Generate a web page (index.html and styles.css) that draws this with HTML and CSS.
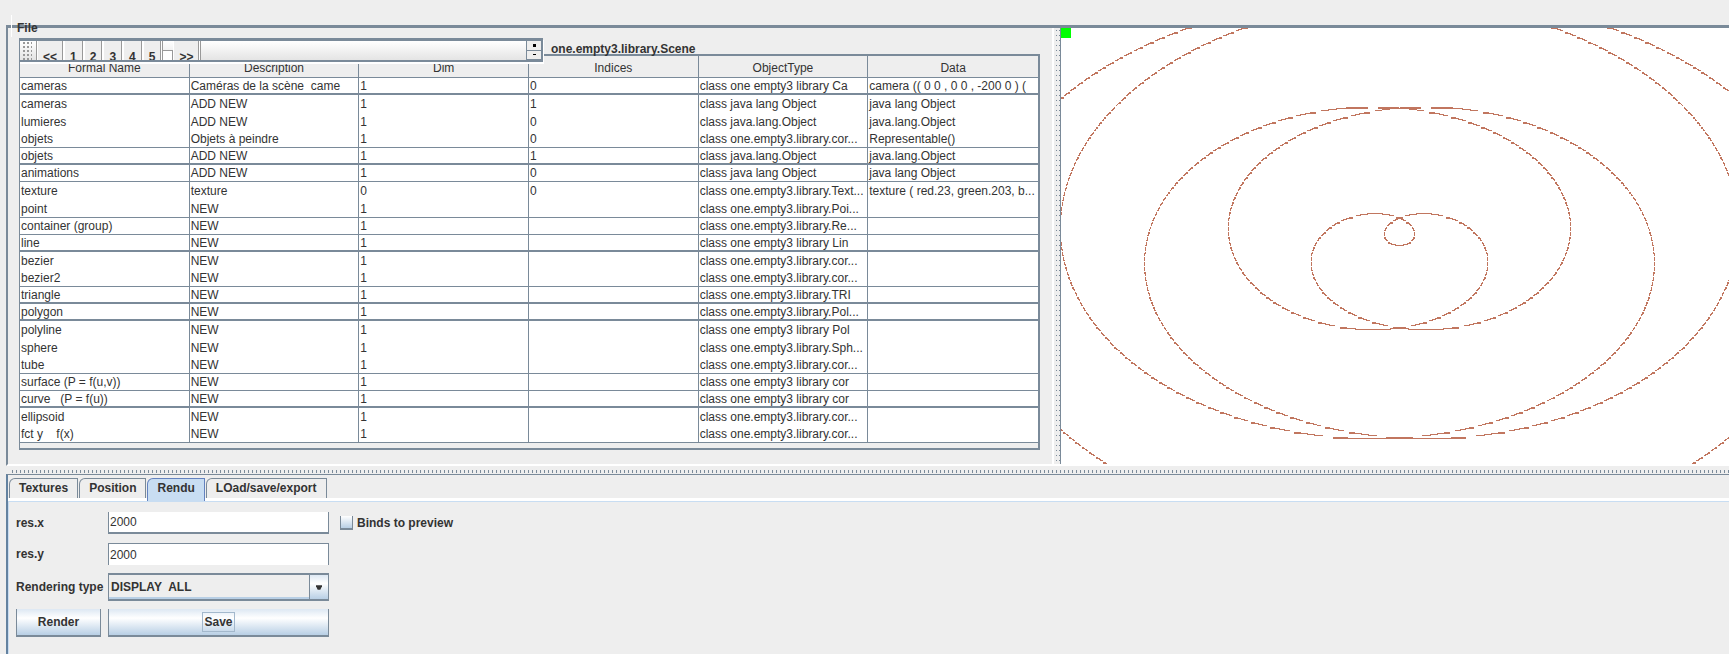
FILE: index.html
```
<!DOCTYPE html>
<html lang="fr">
<head>
<meta charset="utf-8">
<title>one.empty3.library.Scene</title>
<link rel="stylesheet" href="styles.css">
</head>
<body>
<div class="app">
  <header class="menu-bar"></header>
  <main class="workspace">
    <section class="editor">
      <button class="file-menu" type="button">File</button>
      <div class="toolbar-row">
        <div class="toolbar">
          <span class="grip"></span>
          <button type="button">&lt;&lt;</button>
          <button type="button">1</button>
          <button type="button">2</button>
          <button type="button">3</button>
          <button type="button">4</button>
          <button type="button">5</button>
          <input class="page-check" type="checkbox" aria-label="Page">
          <button type="button">&gt;&gt;</button>
          <div class="stepper">
            <button type="button" aria-label="Up"><svg viewBox="0 0 3 3"><rect width="3" height="3"/></svg></button>
            <button type="button" aria-label="Down"><svg viewBox="0 0 3 3"><rect y="1" width="3" height="1"/></svg></button>
          </div>
        </div>
        <span class="scene-name">one.empty3.library.Scene</span>
      </div>
      <div class="table-frame">
        <table class="props">
          <thead><tr><th>Formal Name</th><th>Description</th><th>Dim</th><th>Indices</th><th>ObjectType</th><th>Data</th></tr></thead>
          <tbody>
            <tr class="thick"><td>cameras</td><td>Caméras de la scène  came</td><td>1</td><td>0</td><td>class one empty3 library Ca</td><td>camera (( 0 0 , 0 0 , -200 0 ) (</td></tr>
            <tr class="open"><td>cameras</td><td>ADD NEW</td><td>1</td><td>1</td><td>class java lang Object</td><td>java lang Object</td></tr>
            <tr class="open"><td>lumieres</td><td>ADD NEW</td><td>1</td><td>0</td><td>class java.lang.Object</td><td>java.lang.Object</td></tr>
            <tr><td>objets</td><td>Objets à peindre</td><td>1</td><td>0</td><td>class one.empty3.library.cor...</td><td>Representable()</td></tr>
            <tr class="thick"><td>objets</td><td>ADD NEW</td><td>1</td><td>1</td><td>class java.lang.Object</td><td>java.lang.Object</td></tr>
            <tr><td>animations</td><td>ADD NEW</td><td>1</td><td>0</td><td>class java lang Object</td><td>java lang Object</td></tr>
            <tr class="open"><td>texture</td><td>texture</td><td>0</td><td>0</td><td>class one.empty3.library.Text...</td><td>texture ( red.23, green.203, b...</td></tr>
            <tr class="tall"><td>point</td><td>NEW</td><td>1</td><td></td><td>class one.empty3.library.Poi...</td><td></td></tr>
            <tr><td>container (group)</td><td>NEW</td><td>1</td><td></td><td>class one.empty3.library.Re...</td><td></td></tr>
            <tr class="thick"><td>line</td><td>NEW</td><td>1</td><td></td><td>class one empty3 library Lin</td><td></td></tr>
            <tr class="open"><td>bezier</td><td>NEW</td><td>1</td><td></td><td>class one.empty3.library.cor...</td><td></td></tr>
            <tr><td>bezier2</td><td>NEW</td><td>1</td><td></td><td>class one.empty3.library.cor...</td><td></td></tr>
            <tr class="thick"><td>triangle</td><td>NEW</td><td>1</td><td></td><td>class one.empty3.library.TRI</td><td></td></tr>
            <tr class="thick"><td>polygon</td><td>NEW</td><td>1</td><td></td><td>class one.empty3.library.Pol...</td><td></td></tr>
            <tr class="open"><td>polyline</td><td>NEW</td><td>1</td><td></td><td>class one empty3 library Pol</td><td></td></tr>
            <tr class="open"><td>sphere</td><td>NEW</td><td>1</td><td></td><td>class one.empty3.library.Sph...</td><td></td></tr>
            <tr><td>tube</td><td>NEW</td><td>1</td><td></td><td>class one.empty3.library.cor...</td><td></td></tr>
            <tr><td>surface (P = f(u,v))</td><td>NEW</td><td>1</td><td></td><td>class one empty3 library cor</td><td></td></tr>
            <tr class="thick"><td>curve   (P = f(u))</td><td>NEW</td><td>1</td><td></td><td>class one empty3 library cor</td><td></td></tr>
            <tr class="open"><td>ellipsoid</td><td>NEW</td><td>1</td><td></td><td>class one.empty3.library.cor...</td><td></td></tr>
            <tr><td>fct y    f(x)</td><td>NEW</td><td>1</td><td></td><td>class one.empty3.library.cor...</td><td></td></tr>
          </tbody>
        </table>
      </div>
    </section>
    <div class="divider-v"></div>
    <section class="preview">
      <canvas id="plot"></canvas>
      <span class="status-light"></span>
    </section>
  </main>
  <div class="divider-h"></div>
  <section class="tabs-pane">
    <nav class="tabs">
      <button type="button">Textures</button>
      <button type="button">Position</button>
      <button type="button" class="active">Rendu</button>
      <button type="button">LOad/save/export</button>
    </nav>
    <form class="render-form">
      <label for="resx">res.x</label>
      <input id="resx" class="field" type="text" value="2000">
      <label class="bind"><input type="checkbox" class="check">Binds to preview</label>
      <label for="resy">res.y</label>
      <input id="resy" class="field field-open" type="text" value="2000">
      <label class="row-start" for="rtype">Rendering type</label>
      <div class="combo">
        <select id="rtype"><option>DISPLAY&nbsp; ALL</option></select>
        <svg class="arrow" viewBox="0 0 7 5"><path d="M0 0h7v1L5 5H2L0 1z"/></svg>
      </div>
      <button class="push row-start" type="button">Render</button>
      <button class="push" type="button"><span class="focus">Save</span></button>
    </form>
  </section>
</div>
<script src="plot.js"></script>
</body>
</html>
```
FILE: styles.css
```
* { box-sizing: border-box; }
html, body { height: 100%; }
body { margin: 0; overflow: hidden; background: #eee; color: #333; font: 12px/14px "Liberation Sans", Arial, sans-serif; }
button, input, select { font: inherit; color: inherit; margin: 0; padding: 0; border: 0; border-radius: 0; background: none; appearance: none; }
.app { display: flex; flex-direction: column; height: 100%; padding-left: 6px; }
.menu-bar { height: 25px; flex: none; }
.workspace { display: flex; flex: none; border-top: 3px solid #7a8a99; border-left: 2px solid #7a8a99; border-bottom: 2px solid #fff; }
.editor { position: relative; flex: 1 1 0; min-width: 0; padding: 10px 12px 14px 11px; }
.file-menu { position: absolute; left: 3px; top: -13px; height: 22px; padding: 4px 0 0 5px; border-left: 1px solid #fff; font-weight: bold; line-height: 14px; }
.toolbar-row { position: relative; z-index: 1; display: flex; gap: 8px; height: 16px; font-weight: bold; }
.toolbar { display: flex; flex: 0 0 524px; height: 24px; border: solid #7a8a99; border-width: 3px 2px 2px 1px; background: linear-gradient(#fff, #e4e4e4); box-shadow: 1px 2px 0 #fff; overflow: hidden; }
.toolbar > button { border-left: 1px solid #fff; border-right: 1px solid #999; padding: 9px 5px 0; height: 22px; background: #eee; box-shadow: 1px 0 #fff, 2px 0 #999; margin-right: 1px; }
.grip { width: 17px; border-right: 1px solid #999; background: radial-gradient(circle, #999 1px, transparent 1px) 1px 0 / 4px 4px content-box; padding: 0 4px 0 1px; }
.page-check { width: 11px; height: 14px; margin-top: 9px; border: 1px solid #999; background: #fff; }
.stepper { display: flex; flex-direction: column; width: 15px; margin-left: auto; border-left: 1px solid #7a8a99; background: #eee; }
.stepper button { display: grid; place-items: center; height: 10px; border-bottom: 1px solid #7a8a99; }
.stepper svg { width: 3px; height: 3px; }
.scene-name { padding-top: 4px; }
.table-frame { border: solid #7a8a99; border-width: 2px 2px 2px 1px; padding-bottom: 5px; }
.props { width: 100%; table-layout: fixed; border-collapse: separate; border-spacing: 0; background: #fff; }
.props th { height: 22px; padding: 3px 0 0; background: #eee; font-weight: normal; }
.props td { height: 17px; padding: 0 1px; overflow: hidden; white-space: pre; line-height: 14px; }
.props th, .props td { border-right: 1px solid #7a8a99; border-bottom: 1px solid #7a8a99; }
.props th:last-child, .props td:last-child { border-right: 0; }
.props .thick td { border-bottom-width: 2px; }
.props .open td { border-bottom: 0; height: 18px; }
.props .tall td { height: 18px; }
.divider-v { flex: 0 0 8px; border-left: 2px solid #fff; background: radial-gradient(circle, #7a8a99 1px, transparent 1px) 1px 0 / 3px 5px; }
.divider-h { flex: none; height: 8px; background: repeating-linear-gradient(90deg, #7a8a99 0 1px, transparent 1px 4px) 6px 4px / 100% 3px no-repeat; }
.preview { position: relative; flex: 0 0 669px; border-left: 1px solid #7a8a99; background: #fff; }
.preview canvas { position: absolute; inset: 0; width: 100%; height: 100%; }
.status-light { position: absolute; left: 0; top: 0; width: 10px; height: 10px; background: #0f0; }
.tabs-pane { flex: 1; border-top: 1px solid #7a8a99; border-left: 2px solid #6382a0; }
.tabs { display: flex; align-items: flex-end; gap: 1px; height: 26px; padding-left: 1px; border-bottom: 3px solid #fff; }
.tabs button { height: 20px; padding: 0 9px 1px; border: 1px solid #7a8a99; border-bottom: 0; border-top-left-radius: 6px; font-weight: bold; }
.tabs .active { background: #c8ddf2; border-color: #6382bf; height: 23px; margin-bottom: -3px; padding-bottom: 4px; }
.render-form { display: grid; grid-template-columns: 85px 221px auto; grid-template-rows: 24px 22px 28px 28px; justify-content: start; align-items: center; gap: 8px 7px; padding: 9px 7px; border-top: 1px solid #c8ddf2; border-left: 1px solid #c8ddf2; height: 100%; align-content: start; font-weight: bold; white-space: nowrap; }
.row-start { grid-column: 1; }
.field { width: 100%; height: 22px; padding: 0 1px; border: solid #7a8a99; border-width: 0 1px 2px; background: #fff; font-weight: normal; }
.field-open { border-width: 1px 1px 0; }
.bind { display: flex; align-items: center; gap: 4px; padding-left: 4px; }
.check { width: 13px; height: 14px; border: solid #7a8a99; border-width: 0 1px 2px; background: linear-gradient(#fff, #b8cfe5); }
.combo { position: relative; height: 28px; }
.combo select { width: 100%; height: 28px; padding: 0 2px; border: solid #7a8a99; border-width: 2px 1px; background: linear-gradient(#7a8a99, #7a8a99) right 18px top / 1px 100% no-repeat, linear-gradient(#dde8f3, #fff 35%, #b8cfe5) right / 18px 100% no-repeat, linear-gradient(#b8cfe5, #b8cfe5) bottom / 100% 2px no-repeat; }
.arrow { position: absolute; right: 7px; top: 12px; width: 6px; height: 5px; fill: #333; pointer-events: none; }
.push { height: 28px; border: solid #7a8a99; border-width: 0 1px 2px; background: linear-gradient(#dde8f3, #fff 35%, #b8cfe5); }
.focus { padding: 2px 1px; border: 1px solid #a3b8cc; }
```
FILE: plot.js
```
const canvas = document.getElementById("plot");
canvas.width = canvas.clientWidth;
canvas.height = canvas.clientHeight;
const ctx = canvas.getContext("2d");
ctx.fillStyle = "#c1765f";

// Height of each pixel row of the plot, in groups of five: one row is skipped and one is doubled.
const rowHeights = [1, 1, 1, 0, 2];

for (let t = -25; t < 25; t += 0.0005) {
  const x = Math.round(338 + 26.9 * t * Math.cos(t));
  const y = Math.round(217 - 17.5 * t * Math.sin(t));
  const h = rowHeights[((y % 5) + 5) % 5];
  if (h) ctx.fillRect(x, y, 1, h);
}
```
